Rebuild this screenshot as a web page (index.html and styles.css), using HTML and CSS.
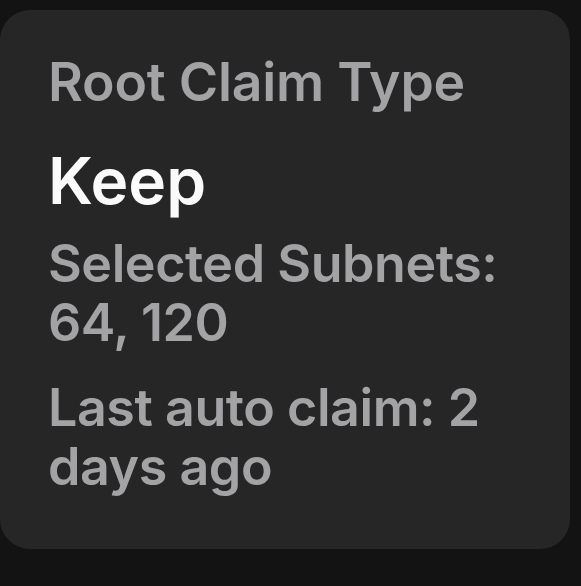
FILE: index.html
```html
<!DOCTYPE html>
<html>
<head>
<meta charset="utf-8">
<link rel="stylesheet" href="styles.css">
</head>
<body>
<div class="card">
  <div class="label">Root Claim Type</div>
  <div class="value">Keep</div>
  <div class="detail subnets">Selected Subnets: 64, 120</div>
  <div class="detail last">Last auto claim: 2 days ago</div>
</div>
</body>
</html>
```
FILE: styles.css
```css
html, body {
  margin: 0;
  padding: 0;
  background: #131313;
}
body {
  padding-top: 10px;
  font-family: Inter, "Noto Sans", sans-serif;
}
.card {
  box-sizing: border-box;
  width: 570px;
  height: 539px;
  background: #262626;
  border-radius: 30px;
  padding: 43px 40px 0 48px;
}
.label {
  font-size: 53.5px;
  line-height: 58px;
  font-weight: 600;
  color: #a3a3a6;
  letter-spacing: -0.2px;
}
.value {
  margin-top: 34px;
  font-size: 64px;
  line-height: 72px;
  font-weight: 600;
  color: #fafafa;
  letter-spacing: 0;
}
.detail {
  font-size: 52px;
  line-height: 59px;
  font-weight: 600;
  color: #a3a3a6;
  letter-spacing: -0.45px;
}
.subnets {
  margin-top: 17px;
}
.last {
  margin-top: 26px;
}
```
